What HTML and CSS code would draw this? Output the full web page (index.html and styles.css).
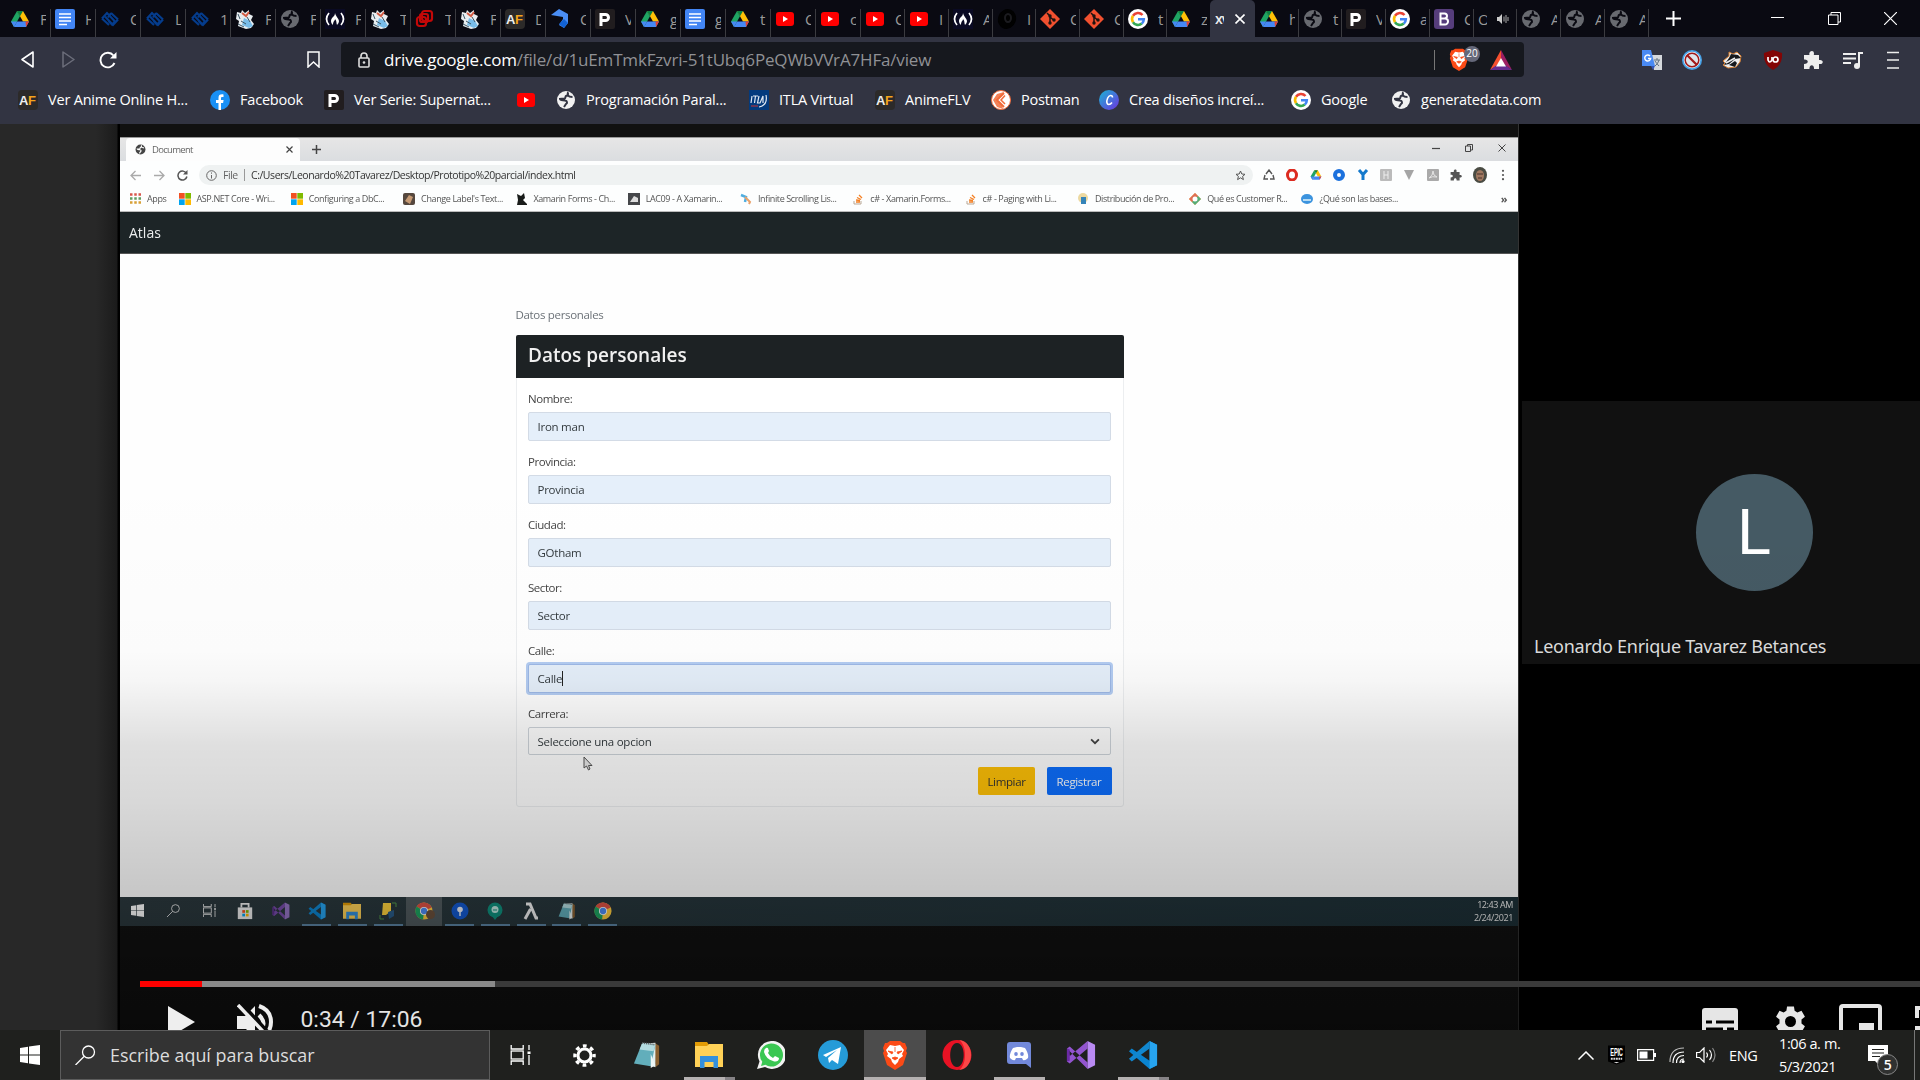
FILE: index.html
```html
<!DOCTYPE html>
<html lang="es">
<head>
<meta charset="utf-8">
<title>drive.google.com</title>
<link rel="stylesheet" href="styles.css">
</head>
<body>
<svg class="defs" aria-hidden="true">
  <symbol id="drive" viewBox="0 0 20 20"><path d="M7 2h6l6 10.5h-6z" fill="#ffc107"/><path d="M7 2l3 5.2L4 18 1 12.5z" fill="#1fa463"/><path d="M4 18l3-5.5h12L16 18z" fill="#4688f4"/><path d="M7 2h6l-3 5.2z" fill="#0b8043"/><path d="M1 12.5L4 18l3-5.5z" fill="#4688f4"/><path d="M15.500 12.500H19L16 18z" fill="#e34133"/></symbol>
  <symbol id="docs" viewBox="0 0 20 20"><rect width="20" height="20" rx="2" fill="#4285f4"/><path d="M4 5h12M4 8.500h12M4 12h12M4 15.500h8" stroke="#fff" stroke-width="1.700"/></symbol>
  <symbol id="knot" viewBox="0 0 20 20"><g fill="none" stroke="#053c8c" stroke-width="2.200"><path d="M2 9.500L7 4l8 8.500-3 3-3.500-3.500"/><path d="M18 10.500L13 16 5 7.500"/><path d="M11 4l7 6.500M9 16L2 9.500M8 8.500l3-4.500"/></g></symbol>
  <symbol id="rick" viewBox="0 0 20 20"><path d="M2 3l4 1 1-3 3 3 4-3v4l4 2-2 4 3 4-3 4-5 1-8-3 1-5-3-2z" fill="#e8edf0"/><path d="M9 9l6 3 3 5-4 2-7-3z" fill="#79bce8"/><path d="M7 4l4 3 3-4" stroke="#d35b43" stroke-width="2" fill="none"/><path d="M3 5l2 5M6 12l5 3M12 8l3 5M3 15l6 3" stroke="#3b5565" fill="none"/></symbol>
  <symbol id="globe" viewBox="0 0 20 20"><circle cx="10" cy="10" r="9"/><path d="M11 2.500c2 1 1 3-1 3.500-1 .5 0 2-1.500 2.500L4 9c0 1.500 3 1 5 1.500 2.500.5 2.500 2.500 1 3.500l-2 3M12 5.500c1 1.500 2 1.500 4.500 1.500" class="land"/></symbol>
  <symbol id="fcc" viewBox="0 0 20 20"><rect width="20" height="20" fill="#0a0a23"/><path d="M4 4q-5 6 0 12M16 4q5 6 0 12" stroke="#fff" stroke-width="1.700" fill="none"/><path d="M10 4c0 4-4 4-4 8 0 2 1 3 2 4 0-4 2-4 2-6 2 2 1 4 2 6 5-5-1-7-2-12z" fill="#fff"/></symbol>
  <symbol id="rings" viewBox="0 0 20 20"><g fill="none" stroke="#c30808" stroke-width="2.200"><rect x="7" y="2" width="10" height="10" rx="2.500"/><rect x="2" y="8" width="9" height="9" rx="2.500"/><rect x="5" y="5" width="8" height="8" rx="2"/></g></symbol>
  <symbol id="af" viewBox="0 0 20 20"><rect width="20" height="20" rx="4" fill="#2c2a29"/><text x="1" y="15" class="t-af" fill="#eee">A<tspan fill="#f5a31b">F</tspan></text></symbol>
  <symbol id="kite" viewBox="0 0 20 20"><path d="M1 6l8-6 9 5v9l-4 5-5-3 4-6V8z" fill="#4a8ef5"/><path d="M9 15l5-5 4 4-4 5z" fill="#1262d4"/></symbol>
  <symbol id="pee" viewBox="0 0 20 20"><rect width="20" height="20" rx="2" fill="#211d1f"/><path d="M6 4v13M6 5.500h4.500a3 3 0 0 1 0 6H7" fill="none" stroke="#fff" stroke-width="3"/></symbol>
  <symbol id="yt" viewBox="0 0 20 20"><rect x="1" y="3" width="18" height="14" rx="3" fill="#f00"/><path d="M8 7l5 3-5 3z" fill="#fff"/></symbol>
  <symbol id="disc" viewBox="0 0 20 20"><ellipse cx="10" cy="10" rx="9" ry="10" fill="#010101" transform="rotate(20 10 10)"/><ellipse cx="11" cy="9" rx="3" ry="4" fill="none" stroke="#1b1b1f" stroke-width="2"/></symbol>
  <symbol id="git" viewBox="0 0 20 20"><path d="M10 0l10 10-10 10L0 10z" fill="#f1502f"/><path d="M7 4l3 3v7M10 8l3.500 3" stroke="#1c1310" stroke-width="1.500" fill="none"/><g fill="#1c1310"><circle cx="10" cy="7" r="1.700"/><circle cx="10" cy="14" r="1.700"/><circle cx="14" cy="11" r="1.700"/></g></symbol>
  <symbol id="google" viewBox="0 0 20 20"><circle cx="10" cy="10" r="10" fill="#fff"/><g fill="none" stroke-width="2.600"><path d="M14.500 6A6 6 0 0 0 5 6.800" stroke="#ea4335"/><path d="M5 6.800a6 6 0 0 0 0 6.400" stroke="#fbbc05"/><path d="M5 13.200a6 6 0 0 0 8.800 1.400" stroke="#34a853"/><path d="M13.800 14.600A6 6 0 0 0 15.800 10.200H10" stroke="#4285f4"/></g></symbol>
  <symbol id="boot" viewBox="0 0 20 20"><rect width="20" height="20" rx="3" fill="#563d7c"/><path d="M6.500 4.500v11h4.500a3 3 0 0 0 0-6H7h3.500a2.500 2.500 0 0 0 0-5z" fill="none" stroke="#fff" stroke-width="2"/></symbol>
  <symbol id="fb" viewBox="0 0 20 20"><circle cx="10" cy="10" r="10" fill="#1990f5"/><path d="M8.500 20v-7H6v-3h2.500V8c0-3 1.500-4 5-3.600V7c-2-.2-2.500 0-2.500 1.300V10h2.600l-.5 3H11v7z" fill="#fff"/></symbol>
  <symbol id="itla" viewBox="0 0 20 20"><rect width="20" height="20" fill="#033a7d"/><path d="M3 6l-1 7M4 6h5M6.500 6l-1 7M10 6l-1.500 7h2.500l3-7v7M17 5q2 10-7 12" stroke="#dfe8f3" stroke-width="1.200" fill="none"/><path d="M2 16h7" stroke="#c33"/></symbol>
  <symbol id="postman" viewBox="0 0 20 20"><circle cx="10" cy="10" r="9.500" fill="#fff" stroke="#f26b3a"/><path d="M13 3l-7 7 7 7" stroke="#f26b3a" stroke-width="2" fill="none"/><path d="M13 2l-2 3-5 5 5 5 1 4-6-2-4-7 4-6z" fill="#f26b3a" opacity=".85"/><path d="M14 5.500l-4 4.500 4 4" stroke="#f26b3a" stroke-width="1.500" fill="none"/></symbol>
  <symbol id="canva" viewBox="0 0 20 20"><linearGradient id="cg" x2="1" y2="1"><stop stop-color="#19b5d4"/><stop offset="1" stop-color="#7033e0"/></linearGradient><circle cx="10" cy="10" r="10" fill="url(#cg)"/><path d="M13.500 7.500c0-3-3.500-2.500-4.800.5-1.700 4-.7 6.500 1 6.500 1.500 0 2.600-1 3.300-2" stroke="#fff" stroke-width="1.600" fill="none"/></symbol>
  <symbol id="lion" viewBox="0 0 26 30"><path d="M8 1h10l3 2h2l2 5-1 3 1 2-4 12-8 5-8-5L1 13l1-2-1-3 2-5h2z" fill="#fb4a16"/><path d="M8 5l5 1 5-1 4 5-2 4 1 2-4 3-1 3-3 3-3-3-1-3-4-3 1-2-2-4z" fill="#fff"/><path d="M6 11l5 1-1 2zM20 11l-5 1 1 2zM10 18l3-1 3 1-3 2zM13 7v5" fill="#fb4a16" stroke="#fb4a16" stroke-width=".8"/></symbol>
  <symbol id="win" viewBox="0 0 20 20"><path d="M0 3l8-1.200V9.500H0zM9 1.600L20 0v9.500H9zM0 10.500h8v7.700L0 17zM9 10.500h11V20L9 18.400z"/></symbol>
  <symbol id="lens" viewBox="0 0 20 20"><circle cx="13" cy="7" r="6" fill="none" stroke="currentColor" stroke-width="1.300"/><path d="M8.500 11.500L0 20" stroke="currentColor" stroke-width="1.300"/></symbol>
  <symbol id="tv" viewBox="0 0 20 20"><g fill="none" stroke="currentColor" stroke-width="1.300"><path d="M.7 0v4h12V0M.7 20v-4h12v4"/><rect x=".7" y="6" width="12" height="8"/><path d="M18.500 0v5M18.500 10v10"/></g><path d="M17 6.500h3V9h-3z" fill="currentColor"/></symbol>
  <symbol id="vsc" viewBox="0 0 32 32"><path d="M23 1l8 4v22l-8 4L1 12l3-3 19 13z" fill="#0a84d0"/><path d="M23 1l8 4v22l-8 4V1z" fill="#27a4f0"/><path d="M1 20l3 3L23 9V1z" fill="#1187cf"/></symbol>
  <symbol id="vs" viewBox="0 0 32 32"><path d="M1 9l3-2 19 17v7L1 9zM1 9v14l3 2L23 9V1L4 17z" fill="#9254cf"/><path d="M1 9v14l3-1V10z" fill="#6b2aa5"/><path d="M23 1l8 4v22l-8 4z" fill="#b98af3"/></symbol>
  <symbol id="folder" viewBox="0 0 28 28"><path d="M0 1h12l2 3v3H0z" fill="#e29b05"/><path d="M0 5h12l2-2h14v23H0z" fill="#ffd157"/><path d="M5 27V15h18v12h-4.500v-6h-9v6z" fill="#3490dc"/></symbol>
  <symbol id="notepad" viewBox="0 0 28 30"><path d="M22 2l5 3v20l-4 3z" fill="#8a6030"/><path d="M9 3l14-1v26l-6-2z" fill="#e1eff0"/><path d="M9 2l14 2-5 23L0 24z" fill="#62aebb"/><path d="M9 2l14 2-2 7-15-2z" fill="#b3dce0"/><path d="M18 14l5 12-5 3z" fill="#eef6f6"/><path d="M9 2l14 2" stroke="#555" stroke-width="2" stroke-dasharray="1 1"/></symbol>
  <symbol id="puzzle" viewBox="0 0 20 20"><path d="M1 5h5.500C5 1 11-1 11 3.500L10.800 5H16v5c5-1 5 5 0 4v5h-5c.5-5-5-5-4.500 0H1v-5c5 0 5-5 0-4.500z"/></symbol>
  <symbol id="chrome" viewBox="0 0 20 20"><circle cx="10" cy="10" r="9.500" fill="#ffcd40"/><path d="M10 10L1.800 5A9.500 9.500 0 0 1 18.500 6z" fill="#dd5144"/><path d="M10 10L1.800 5A9.500 9.500 0 0 0 9 19.500z" fill="#1da462"/><circle cx="10" cy="10" r="4.500" fill="#fff"/><circle cx="10" cy="10" r="3.500" fill="#4b8bf5"/></symbol>
  <symbol id="ms" viewBox="0 0 12 12"><path d="M0 0h5.700v5.700H0z" fill="#f25022"/><path d="M6.300 0H12v5.700H6.300z" fill="#7fba00"/><path d="M0 6.300h5.700V12H0z" fill="#00a4ef"/><path d="M6.300 6.300H12V12H6.300z" fill="#ffb900"/></symbol>
  <symbol id="stack" viewBox="0 0 12 12"><path d="M2 8v3h7V8" fill="none" stroke="#b9a795"/><path d="M4 9h4M4 7l4 .5M5 4.500l4 2M7 2l3 3" stroke="#f48024" stroke-width="1.300"/></symbol>
</svg>

<header class="browser">
  <div class="tabstrip">
    <div class="tabs">
      <div class="tab"><svg><use href="#drive"/></svg><span>F</span></div>
      <div class="tab"><svg><use href="#docs"/></svg><span>H</span></div>
      <div class="tab"><svg><use href="#knot"/></svg><span>C</span></div>
      <div class="tab"><svg><use href="#knot"/></svg><span>L</span></div>
      <div class="tab"><svg><use href="#knot"/></svg><span>1</span></div>
      <div class="tab"><svg><use href="#rick"/></svg><span>F</span></div>
      <div class="tab"><svg class="dim"><use href="#globe"/></svg><span>F</span></div>
      <div class="tab"><svg><use href="#fcc"/></svg><span>F</span></div>
      <div class="tab"><svg><use href="#rick"/></svg><span>T</span></div>
      <div class="tab"><svg><use href="#rings"/></svg><span>T</span></div>
      <div class="tab"><svg><use href="#rick"/></svg><span>F</span></div>
      <div class="tab"><svg><use href="#af"/></svg><span>D</span></div>
      <div class="tab"><svg><use href="#kite"/></svg><span>C</span></div>
      <div class="tab"><svg><use href="#pee"/></svg><span>V</span></div>
      <div class="tab"><svg><use href="#drive"/></svg><span>g</span></div>
      <div class="tab"><svg><use href="#docs"/></svg><span>g</span></div>
      <div class="tab"><svg><use href="#drive"/></svg><span>t</span></div>
      <div class="tab"><svg><use href="#yt"/></svg><span>C</span></div>
      <div class="tab"><svg><use href="#yt"/></svg><span>c</span></div>
      <div class="tab"><svg><use href="#yt"/></svg><span>C</span></div>
      <div class="tab"><svg><use href="#yt"/></svg><span>I</span></div>
      <div class="tab"><svg><use href="#fcc"/></svg><span>A</span></div>
      <div class="tab"><svg><use href="#disc"/></svg><span>I</span></div>
      <div class="tab"><svg><use href="#git"/></svg><span>C</span></div>
      <div class="tab"><svg><use href="#git"/></svg><span>C</span></div>
      <div class="tab"><svg><use href="#google"/></svg><span>t</span></div>
      <div class="tab no-line"><svg><use href="#drive"/></svg><span>z</span></div>
      <div class="tab active"><span>xv</span><svg class="x" viewBox="0 0 10 10"><path d="M.5.500l9 9M9.500.500l-9 9" stroke="#fff" stroke-width="1.600"/></svg></div>
      <div class="tab"><svg><use href="#drive"/></svg><span>h</span></div>
      <div class="tab"><svg class="dim"><use href="#globe"/></svg><span>t</span></div>
      <div class="tab"><svg><use href="#pee"/></svg><span>V</span></div>
      <div class="tab"><svg><use href="#google"/></svg><span>a</span></div>
      <div class="tab"><svg><use href="#boot"/></svg><span>C</span></div>
      <div class="tab audio"><span>O</span><svg class="spk" viewBox="0 0 12 10"><path d="M0 3h2l3-3v10L2 7H0z" fill="#ccc"/><path d="M7 2.500v5M9 1v8M11 3v4" stroke="#aaa"/></svg></div>
      <div class="tab"><svg class="dim"><use href="#globe"/></svg><span>A</span></div>
      <div class="tab"><svg class="dim"><use href="#globe"/></svg><span>A</span></div>
      <div class="tab"><svg class="dim"><use href="#globe"/></svg><span>A</span></div>
    </div>
    <svg class="plus" viewBox="0 0 15 15"><path d="M7.500 0v15M0 7.500h15" stroke="#fff" stroke-width="2"/></svg>
    <div class="wincontrols">
      <svg viewBox="0 0 13 13"><path d="M0 5.500h13" stroke="#fff"/></svg>
      <svg viewBox="0 0 13 13"><path d="M.5 3h9.500v9.500H.5zM3 3V.500h9.500V10H10" stroke="#fff" fill="none"/></svg>
      <svg viewBox="0 0 13 13"><path d="M0 0l13 13M13 0L0 13" stroke="#fff" stroke-width="1.200"/></svg>
    </div>
  </div>
  <div class="toolbar">
    <div class="nav">
      <svg class="tri" viewBox="0 0 13 17"><path d="M12 1v15L1 8.500z" fill="none" stroke="#fff" stroke-width="1.600" stroke-linejoin="round"/></svg>
      <svg class="tri off" viewBox="0 0 13 17"><path d="M1 1v15l11-7.500z" fill="none" stroke="#6c6e7b" stroke-width="1.500" stroke-linejoin="round"/></svg>
      <svg class="reload" viewBox="0 0 18 18"><path d="M14.500 4.500A7.300 7.300 0 1 0 15.500 12" fill="none" stroke="#fff" stroke-width="1.900"/><path d="M17.500 1v6.500h-6.500z" fill="#fff"/></svg>
    </div>
    <svg class="mark" viewBox="0 0 13 17"><path d="M1 1h11v15l-5.500-5L1 16z" fill="none" stroke="#fff" stroke-width="1.500"/></svg>
    <div class="address">
      <svg class="lock" viewBox="0 0 12 16"><rect x="1" y="6" width="10" height="9" rx="1" fill="none" stroke="#ddd" stroke-width="1.600"/><path d="M3 6V4a3 3 0 0 1 6 0v2" fill="none" stroke="#ddd" stroke-width="1.600"/><circle cx="6" cy="10.500" r="1.300" fill="#ddd"/></svg>
      <p class="url"><b>drive.google.com</b>/file/d/1uEmTmkFzvri-51tUbq6PeQWbVVrA7HFa/view</p>
      <i class="sep"></i>
      <div class="shield"><svg><use href="#lion"/></svg><em>20</em></div>
      <svg class="bat" viewBox="0 0 22 20"><path d="M11 0L0 20l11-7z" fill="#f5502f"/><path d="M11 0l11 20-11-7z" fill="#9e1f63"/><path d="M0 20l11-8 11 8z" fill="#662d91"/><path d="M11 8l5 8.500H6z" fill="#fff"/></svg>
    </div>
    <div class="exts">
      <svg viewBox="0 0 20 20"><path d="M8 5h12v15h-8z" fill="#d5d8dc"/><path d="M12 10h6M15 8v2M17 10q-1 4-4 6M13 11q2 3 4 5" stroke="#607080" fill="none"/><path d="M0 0h9l4 16H0z" fill="#4a8af4"/><path d="M9 16h4l-2 4z" fill="#3757b8"/><path d="M8 6a3 3 0 1 0 .7 2.500H6" stroke="#fff" stroke-width="1.400" fill="none"/></svg>
      <svg viewBox="0 0 20 20"><circle cx="10" cy="10" r="10" fill="#48a3e8"/><circle cx="10" cy="10" r="8.300" fill="#e9eef2"/><circle cx="10" cy="10" r="6.800" fill="#dfe6ec" stroke="#a11919" stroke-width="1.500"/><path d="M5 5l10 10" stroke="#a11919" stroke-width="2.200"/></svg>
      <svg viewBox="0 0 20 20"><path d="M1 11l6-5 0-4 4 2 4-2 4 4-1 6-4 5-8 1-5-3 2-2z" fill="#eee" stroke="#d98031"/><path d="M9 4l7 1 3 3-6 1-6 5-5 1 5-7z" fill="#16191d"/><path d="M7 15l6-4 2 2-2 4z" fill="#16191d"/><path d="M4 13l9-5" stroke="#eee" stroke-width="1.500"/></svg>
      <svg viewBox="0 0 20 20"><path d="M10 0l9 3q1 12-9 17Q0 15 1 3z" fill="#830505"/><path d="M5 7v3q1.500 4 4 0V7" stroke="#fff" stroke-width="1.700" fill="none"/><circle cx="12.500" cy="9.500" r="2.500" stroke="#fff" stroke-width="1.700" fill="none"/></svg>
      <svg viewBox="0 0 20 20" fill="#eee"><use href="#puzzle"/></svg>
      <svg viewBox="0 0 20 20"><path d="M0 4h13M0 8.500h13M0 13h8M16 16V3h4" stroke="#eee" stroke-width="2" fill="none"/><circle cx="14" cy="16" r="3" fill="#eee"/></svg>
      <svg viewBox="0 0 20 20"><path d="M4 2.500h12M4 10h12M4 18h12" stroke="#eee" stroke-width="1.600"/></svg>
    </div>
  </div>
  <nav class="marks">
    <a><svg><use href="#af"/></svg><span>Ver Anime Online H...</span></a>
    <a><svg><use href="#fb"/></svg><span>Facebook</span></a>
    <a><svg><use href="#pee"/></svg><span>Ver Serie: Supernat...</span></a>
    <a><svg><use href="#yt"/></svg></a>
    <a><svg class="light"><use href="#globe"/></svg><span>Programación Paral...</span></a>
    <a><svg><use href="#itla"/></svg><span>ITLA Virtual</span></a>
    <a><svg><use href="#af"/></svg><span>AnimeFLV</span></a>
    <a><svg><use href="#postman"/></svg><span>Postman</span></a>
    <a><svg><use href="#canva"/></svg><span>Crea diseños increí...</span></a>
    <a><svg><use href="#google"/></svg><span>Google</span></a>
    <a><svg class="light"><use href="#globe"/></svg><span>generatedata.com</span></a>
  </nav>
</header>

<main class="viewer">
  <aside class="gutter"></aside>
  <section class="player">
    <div class="frame">
      <div class="shared">
        <div class="c-tabs">
          <div class="c-tab"><svg class="c-globe"><use href="#globe"/></svg><span>Document</span><svg class="c-x" viewBox="0 0 7 7"><path d="M.5.500l6 6M6.500.500l-6 6" stroke="#444" stroke-width="1.200"/></svg></div>
          <svg class="c-plus" viewBox="0 0 9 9"><path d="M4.500 0v9M0 4.500h9" stroke="#444" stroke-width="1.500"/></svg>
          <div class="c-win">
            <svg viewBox="0 0 8 8"><path d="M0 4.500h8" stroke="#444" stroke-width="1.200"/></svg>
            <svg viewBox="0 0 8 8"><path d="M.5 2h5v5.500h-5zM2.500 2V.500h5V6h-2" stroke="#444" fill="none"/></svg>
            <svg viewBox="0 0 8 8"><path d="M.5.500l7 7M7.500.500l-7 7" stroke="#444"/></svg>
          </div>
        </div>
        <div class="c-bar">
          <div class="c-nav">
            <svg viewBox="0 0 11 11"><path d="M11 5.500H1M5.500 1L1 5.500 5.500 10" stroke="#aaa" stroke-width="1.300" fill="none"/></svg>
            <svg viewBox="0 0 11 11"><path d="M0 5.500h10M5.500 1L10 5.500 5.500 10" stroke="#aaa" stroke-width="1.300" fill="none"/></svg>
            <svg viewBox="0 0 11 11"><path d="M9.500 3.500a4.500 4.500 0 1 0 .4 3" stroke="#555" stroke-width="1.500" fill="none"/><path d="M10.500 0v4.500H6z" fill="#555"/></svg>
          </div>
          <div class="c-addr">
            <svg viewBox="0 0 11 11"><circle cx="5.500" cy="5.500" r="4.800" fill="none" stroke="#666"/><path d="M5.500 2.500v1.200M5.500 5v3.500" stroke="#666"/></svg>
            <span class="c-file">File</span><i></i>
            <span class="c-path">C:/Users/Leonardo%20Tavarez/Desktop/Prototipo%20parcial/index.html</span>
            <svg class="c-star" viewBox="0 0 11 11"><path d="M5.500 1l1.300 3 3.200.3-2.400 2.100.8 3.200-2.900-1.800-2.900 1.800.8-3.200L1 4.300 4.200 4z" fill="none" stroke="#555"/></svg>
          </div>
          <div class="c-exts">
            <svg viewBox="0 0 12 12"><path d="M3 5l3-4 3 4M10 6l1 4H7M5 10H1l1-4" fill="none" stroke="#555" stroke-width="1.400"/></svg>
            <svg viewBox="0 0 12 12"><ellipse cx="6" cy="6" rx="4.500" ry="5" fill="none" stroke="#dc2b20" stroke-width="3"/></svg>
            <svg viewBox="0 0 20 20"><use href="#drive"/></svg>
            <svg viewBox="0 0 12 12"><circle cx="6" cy="6" r="4" fill="none" stroke="#1c71dd" stroke-width="4"/></svg>
            <svg viewBox="0 0 12 12"><path d="M2 1l4 4.500L10 1M6 5v6" fill="none" stroke="#1479cc" stroke-width="3"/></svg>
            <svg viewBox="0 0 12 12"><rect width="12" height="12" rx="1" fill="#bbb"/><path d="M4 2v8M8 2v8M4 6h4" stroke="#eee"/></svg>
            <svg viewBox="0 0 12 12"><path d="M1 1h10L6 11z" fill="#a5a5a5"/></svg>
            <svg viewBox="0 0 12 12"><rect width="12" height="12" rx="1" fill="#aaa"/><path d="M2 9q4-2 4-7 0 5 4 6-5-1-8 1z" stroke="#e5e5e5" fill="none"/></svg>
            <svg viewBox="0 0 20 20" fill="#555"><use href="#puzzle"/></svg>
            <svg class="c-face" viewBox="0 0 14 16"><ellipse cx="7" cy="8" rx="7" ry="8" fill="#4a4c43"/><ellipse cx="7" cy="8.500" rx="4" ry="5.500" fill="#a07860"/><path d="M4 7h6M5 11h4" stroke="#44312a"/></svg>
            <svg viewBox="0 0 12 12" fill="#555"><circle cx="6" cy="1.800" r="1.100"/><circle cx="6" cy="6" r="1.100"/><circle cx="6" cy="10.200" r="1.100"/></svg>
          </div>
        </div>
        <div class="c-marks">
          <a class="apps"><svg viewBox="0 0 11 11"><path d="M0 1.500h11" stroke="#d8564b" stroke-width="2.500" stroke-dasharray="2.500 1.750"/><path d="M0 5.500h11" stroke="#5f9b60" stroke-width="2.500" stroke-dasharray="2.500 1.750"/><path d="M0 9.500h11" stroke="#d7a036" stroke-width="2.500" stroke-dasharray="2.500 1.750"/></svg><span>Apps</span></a>
          <a><svg><use href="#ms"/></svg><span>ASP.NET Core - Wri...</span></a>
          <a><svg><use href="#ms"/></svg><span>Configuring a DbC...</span></a>
          <a><svg viewBox="0 0 12 12"><rect width="12" height="12" rx="2" fill="#56483e"/><path d="M2 8l4-6 4 2-3 7z" fill="#c69a74"/></svg><span>Change Label's Text...</span></a>
          <a><svg viewBox="0 0 12 12"><path d="M2 1l4 2 3-3 1 5-2 2 4 4v1H2l1-5z" fill="#191c1a"/></svg><span>Xamarin Forms - Ch...</span></a>
          <a><svg viewBox="0 0 12 12"><rect width="12" height="12" fill="#45474a"/><path d="M2 9l4-6 4 2v4z" fill="#ddd"/></svg><span>LAC09 - A Xamarin...</span></a>
          <a><svg viewBox="0 0 12 12"><path d="M1 2l5 2-1 5" stroke="#50aee0" stroke-width="2.500" fill="none"/><path d="M5 4l5 5-1 2" stroke="#e9a26b" stroke-width="2" fill="none"/></svg><span>Infinite Scrolling Lis...</span></a>
          <a><svg><use href="#stack"/></svg><span>c# - Xamarin.Forms...</span></a>
          <a><svg><use href="#stack"/></svg><span>c# - Paging with Li...</span></a>
          <a><svg viewBox="0 0 12 12"><circle cx="6" cy="5" r="5" fill="#ecd9a1"/><path d="M4 4h5v7H4z" fill="#3584b8"/></svg><span>Distribución de Pro...</span></a>
          <a><svg viewBox="0 0 12 12"><path d="M6 0l6 6-6 6-6-6z" fill="#e8a345"/><path d="M6 0l3 3-6 6-3-3z" fill="#df6f54"/><path d="M9 3l3 3-6 6-3-3z" fill="#55ad78"/><circle cx="6" cy="6" r="2.500" fill="#fff"/></svg><span>Qué es Customer R...</span></a>
          <a><svg viewBox="0 0 12 12"><ellipse cx="6" cy="6" rx="6" ry="5" fill="#3b93de"/><path d="M2 7h8" stroke="#b6dbf4" stroke-width="2"/></svg><span>¿Qué son las bases...</span></a>
          <b>»</b>
        </div>
        <div class="atlas">Atlas</div>
        <div class="page">
          <div class="crumb">Datos personales</div>
          <form class="card">
            <h1>Datos personales</h1>
            <div class="fields">
              <label>Nombre:</label><div class="input">Iron man</div>
              <label>Provincia:</label><div class="input">Provincia</div>
              <label>Ciudad:</label><div class="input">GOtham</div>
              <label>Sector:</label><div class="input">Sector</div>
              <label>Calle:</label><div class="input focus">Calle<i class="caret"></i></div>
              <label>Carrera:</label><div class="input select">Seleccione una opcion<svg viewBox="0 0 9 6"><path d="M1 1l3.500 3.500L8 1" stroke="#444" stroke-width="1.600" fill="none"/></svg></div>
            </div>
            <div class="actions"><span class="btn warn">Limpiar</span><span class="btn primary">Registrar</span></div>
          </form>
          <svg class="cursor" viewBox="0 0 10 15"><path d="M1 1v11l2.500-2 2 4 1.500-1-1.500-3.500H9z" fill="#e8e8e8" stroke="#555"/></svg>
        </div>
        <div class="v-taskbar">
          <div class="v-apps">
            <span><svg class="w" fill="#fff"><use href="#win"/></svg></span>
            <span><svg class="w"><use href="#lens"/></svg></span>
            <span><svg class="w"><use href="#tv"/></svg></span>
            <span><svg viewBox="0 0 18 20"><path d="M1 6h16v13H1z" fill="#eee"/><path d="M5 6V2h8v4" stroke="#eee" stroke-width="2" fill="none"/><path d="M6 9h3v3H6z" fill="#f25022"/><path d="M10 9h3v3h-3z" fill="#7fba00"/><path d="M6 13h3v3H6z" fill="#00a4ef"/><path d="M10 13h3v3h-3z" fill="#ffb900"/></svg></span>
            <span><svg class="faint"><use href="#vs"/></svg></span>
            <span class="run"><svg><use href="#vsc"/></svg></span>
            <span class="run"><svg><use href="#folder"/></svg></span>
            <span class="run"><svg viewBox="0 0 18 18"><path d="M4 1h8v8l-5 4H3z" fill="#ffd23d"/><path d="M13 1h4v4M1 13v4h4" stroke="#53964a" fill="none"/><path d="M9 10l6-2v6l-5 3z" fill="#295b87"/></svg></span>
            <span class="run on"><svg><use href="#chrome"/></svg><i></i></span>
            <span class="run"><svg viewBox="0 0 18 18"><circle cx="9" cy="9" r="8.500" fill="#1359cf"/><circle cx="9" cy="7.500" r="2.800" fill="#e9eff9"/><path d="M9 9v5" stroke="#e9eff9" stroke-width="1.500"/></svg></span>
            <span class="run"><svg viewBox="0 0 18 18"><circle cx="9" cy="8" r="7.500" fill="#0f8f7d"/><path d="M6 14l3 4 3-4z" fill="#0f8f7d"/><circle cx="9" cy="7.500" r="3.500" fill="#bfe5df"/><path d="M7 8h4" stroke="#0f8f7d"/></svg></span>
            <span class="run"><svg viewBox="0 0 18 18"><path d="M4 2h4l6 14h2M8.500 7L3 17" stroke="#f1f1f1" stroke-width="3" fill="none"/></svg></span>
            <span class="run"><svg><use href="#notepad"/></svg></span>
            <span class="run"><svg><use href="#chrome"/></svg></span>
          </div>
          <div class="v-clock"><span>12:43 AM</span><span>2/24/2021</span></div>
        </div>
      </div>
      <div class="people">
        <div class="tile">
          <div class="avatar">L</div>
          <p>Leonardo Enrique Tavarez Betances</p>
        </div>
      </div>
    </div>
    <div class="controls">
      <div class="progress"><i class="played"></i><i class="loaded"></i></div>
      <div class="buttons">
        <svg class="play" viewBox="0 0 27 32"><path d="M0 0v32l27-16z" fill="#eee"/></svg>
        <svg class="mute" viewBox="0 0 36 36"><path d="M0 12h8l10-10v32l-9-9H0z" fill="#eee"/><path d="M22 2q12 4 12 16 0 7-4 11M22 11q7 7 3 13" fill="none" stroke="#eee" stroke-width="4"/><path d="M3-2l34 37" stroke="#0a0a0a" stroke-width="4"/><path d="M1 1l35 37" stroke="#eee" stroke-width="3.500"/></svg>
        <span class="time">0:34 / 17:06</span>
        <div class="right">
          <svg class="cc" viewBox="0 0 36 30"><rect width="36" height="30" rx="3" fill="#e6e6e6"/><path d="M4 14h6M14 14h18M4 21h17M25 21h7" stroke="#000" stroke-width="3"/></svg>
          <svg class="cog" viewBox="0 0 24 24" fill="#e6e6e6"><path fill-rule="evenodd" d="M9.500 1h5l.5 3.200 2 1.200L20 4.200l2.500 4.300L20 10.600v2.800l2.500 2.100-2.500 4.300-3-1.200-2 1.200-.5 3.200h-5L9 19.800l-2-1.200-3 1.200-2.500-4.300L4 13.400v-2.800L1.500 8.500 4 4.200l3 1.200 2-1.200zM12 8a4 4 0 1 0 0 8 4 4 0 0 0 0-8z"/></svg>
          <svg class="mini" viewBox="0 0 43 36"><rect x="2" y="2" width="39" height="32" rx="2" fill="none" stroke="#e6e6e6" stroke-width="4"/><path d="M20 19h15v12H20z" fill="#e6e6e6"/></svg>
          <svg class="full" viewBox="0 0 5 30"><path d="M0 0h5v4H4v8H0zM0 20h5v4H0z" fill="#e6e6e6"/></svg>
        </div>
      </div>
    </div>
  </section>
</main>

<footer class="taskbar">
  <div class="start"><svg fill="#fff"><use href="#win"/></svg></div>
  <div class="search"><svg><use href="#lens"/></svg><span>Escribe aquí para buscar</span></div>
  <div class="apps-row">
    <span class="app s20"><svg><use href="#tv"/></svg></span>
    <span class="app s23"><svg viewBox="0 0 24 24"><g fill="none" stroke="#fff"><circle cx="12" cy="12" r="6.800" stroke-width="3.200"/><circle cx="12" cy="12" r="10" stroke-width="3.500" stroke-dasharray="3.900 3.954" stroke-dashoffset="2"/></g></svg></span>
    <span class="app s28"><svg><use href="#notepad"/></svg></span>
    <span class="app s28 running more"><svg><use href="#folder"/></svg></span>
    <span class="app s28"><svg viewBox="0 0 28 28"><path d="M14 0a14 14 0 1 1-6 26L0 28l2.500-7.500A14 14 0 0 1 14 0z" fill="#f2f2f2"/><path d="M14 2.500a11.500 11.500 0 1 1-5.500 21.300L4 25l1.300-4.200A11.500 11.500 0 0 1 14 2.500z" fill="#3ac752"/><path d="M9 7c2-1 2 0 3 3l-1 2q2 4 5 5l2-2 4 2c0 4-4 4-6 3q-7-2-9-9 0-3 2-4z" fill="#fff"/></svg></span>
    <span class="app s30"><svg viewBox="0 0 30 30"><circle cx="15" cy="15" r="15" fill="#259bd8"/><path d="M5 15l18-8-3 17-6-4-3 3-1-5 9-8-11 7z" fill="#fff"/></svg></span>
    <span class="app s30 current"><svg><use href="#lion"/></svg></span>
    <span class="app s30"><svg viewBox="0 0 30 30"><path fill-rule="evenodd" d="M15 0a14.500 15 0 1 0 0 30 14.500 15 0 0 0 0-30zm0 3c9 0 9 24 0 24S6 3 15 3z" fill="#e81224"/><path d="M17 0c16 1 16 29 0 30 8-5 8-25 0-30z" fill="#fb4747"/></svg></span>
    <span class="app s26 running"><svg viewBox="0 0 24 26"><path d="M3 0h18q3 0 3 3v23l-5-4H3q-3 0-3-3V3q0-3 3-3z" fill="#7289da"/><path d="M6 6l4-1h4l4 1q4 6 3 10-3 3-5 2l-1-2H9l-1 2q-2 1-5-2-1-4 3-10z" fill="#fff"/><ellipse cx="9" cy="12" rx="1.800" ry="2" fill="#7289da"/><ellipse cx="15" cy="12" rx="1.800" ry="2" fill="#7289da"/></svg></span>
    <span class="app s30"><svg><use href="#vs"/></svg></span>
    <span class="app s30 running more"><svg><use href="#vsc"/></svg></span>
  </div>
  <div class="tray">
    <svg class="up" viewBox="0 0 16 9"><path d="M.5 8.500L8 1l7.500 7.500" fill="none" stroke="#fff" stroke-width="1.500"/></svg>
    <svg class="epic" viewBox="0 0 18 20"><path d="M0 0h18v17l-9 3-9-3z" fill="#000"/><text x="2.500" y="11" textLength="13" lengthAdjust="spacingAndGlyphs" class="t-epic">EPIC</text><path d="M3 14h12" stroke="#ddd" stroke-width="2" stroke-dasharray="2 .7"/><path d="M6 17.500h6l-3 1.300z" fill="#ddd"/></svg>
    <svg class="batt" viewBox="0 0 19 12"><path d="M.6.600h16v10.800H.6z" fill="none" stroke="#fff" stroke-width="1.200"/><path d="M2.500 2.500h8v7h-8z" fill="#fff"/><path d="M18 4v4" stroke="#fff" stroke-width="2"/></svg>
    <svg class="wifi" viewBox="0 0 16 16"><g fill="none" stroke="#fff" stroke-width="1.200"><path d="M1 15Q1 1 15 1" opacity=".7"/><path d="M4 16q0-11 11-11M7.500 16q0-7.500 7.500-7.500M11 16q0-4 4-4"/></g><circle cx="14" cy="14.500" r="1.600" fill="#fff"/></svg>
    <svg class="vol" viewBox="0 0 20 16"><path d="M.6 5.500h3L8 1v14l-4.400-4.500h-3z" fill="none" stroke="#fff" stroke-width="1.200"/><path d="M10.500 5.500q2 2.500 0 5M13.500 3q4 5 0 10" fill="none" stroke="#fff" stroke-width="1.200"/><path d="M16.500 1q5 7 0 14" fill="none" stroke="#888" stroke-width="1.200"/></svg>
    <span class="lang">ENG</span>
    <div class="clock"><span>1:06 a. m.</span><span>5/3/2021</span></div>
    <div class="note"><svg viewBox="0 0 20 20"><path d="M0 0h20v16h-9v4l-4-4H0z" fill="#fff"/><path d="M4 4.500h12M4 8h12M4 11.500h8" stroke="#1f201e" stroke-width="1.200"/></svg><em>5</em></div>
  </div>
</footer>
</body>
</html>
```
FILE: styles.css
```css
* { box-sizing: border-box; }
body { margin: 0; width: 1920px; height: 1080px; overflow: hidden; display: flex; flex-direction: column; background: #000; color: #fff; font-family: "Open Sans", "Noto Sans", sans-serif; }
svg { display: block; flex: none; }
p, h1 { margin: 0; font-weight: 400; }
em, i { font-style: normal; }
.defs { position: absolute; width: 0; height: 0; }
.land { fill: none; stroke-width: 2; stroke: var(--land, #0a0a12); }
.t-af { font: 700 13px "Liberation Sans", sans-serif; letter-spacing: -.5px; }
.t-epic { font: 700 11px "Liberation Sans", sans-serif; fill: #fff; }

.browser { flex: none; height: 124px; background: #323442; }
.tabstrip { height: 37px; background: #0a0a12; display: flex; align-items: center; padding-left: 6px; }
.tabs { display: grid; height: 37px; grid-template-columns: repeat(19, 45px) 44px 44px 44px 43px 44px 44px 43px 43px 45px 44px 43px 44px 44px 44px 43px 44px 44px 44px; margin-right: 17px; }
.tab { display: flex; align-items: center; padding-left: 4px; overflow: hidden; background: linear-gradient(#3b3b40, #3b3b40) right bottom / 1px 28px no-repeat; font-size: 15px; color: #999; white-space: nowrap; }
.tab svg { width: 20px; height: 20px; }
.tab span { width: 6px; overflow: hidden; margin-left: 10px; flex: none; }
.tab.no-line { background: none; }
.tab.active { background: #323442; border-radius: 5px 5px 0 0; color: #eee; padding-left: 5px; }
.tab.active span { margin: 0; width: 9px; font-weight: 600; font-size: 14px; letter-spacing: -1px; }
.tab svg.x { width: 10px; height: 10px; margin-left: 11px; }
.tab.audio span { margin: 0; width: 9px; }
.tab svg.spk { width: 12px; height: 10px; margin-left: 10px; }
.dim { fill: #686a70; }
.light { fill: #f1f1f1; --land: #323442; }
.plus { width: 15px; height: 15px; }
.wincontrols { display: flex; margin-left: 90px; gap: 43.500px; }
.wincontrols svg { width: 13px; height: 13px; }

.toolbar { height: 45px; display: flex; align-items: center; }
.nav { display: flex; align-items: center; padding-left: 21px; width: 307px; }
.tri { width: 13px; height: 17px; margin-right: 28px; }
.tri.off { margin-right: 24px; }
.reload { width: 18px; height: 18px; }
.mark { width: 13px; height: 17px; margin-right: 21px; }
.address { width: 1183px; height: 35px; background: #16181e; border-radius: 4px; display: flex; align-items: center; padding-left: 17px; }
.lock { width: 12px; height: 16px; }
.url { margin-left: 14px; width: 1050px; white-space: nowrap; font-size: 17px; letter-spacing: -.165px; color: #909195; }
.url b { font-weight: 400; color: #fff; }
.sep { width: 1px; height: 20px; background: #777; }
.shield { position: relative; margin-left: 14px; }
.shield svg { width: 20px; height: 23px; }
.shield em { position: absolute; left: 15px; top: -2px; width: 16px; height: 16px; border-radius: 8px; background: #656879; font-size: 10px; line-height: 15px; text-align: center; }
.bat { width: 22px; height: 20px; margin-left: 21px; }
.exts { display: flex; margin-left: 118px; gap: 20.200px; }
.exts svg { width: 20px; height: 20px; }
.marks { display: grid; grid-template-columns: 192px 114px 192px 40px 193px 126px 116px 108px 192px 100px 160px; padding-left: 18px; height: 36px; align-items: center; font-size: 14.500px; letter-spacing: -.2px; }
.marks a { display: flex; align-items: center; gap: 10px; white-space: nowrap; }
.marks span { line-height: 20px; padding-bottom: 1px; }
.marks svg { width: 20px; height: 20px; }

.viewer { display: flex; height: 906px; flex: none; overflow: hidden; }
.gutter { width: 120px; background: linear-gradient(90deg, #282828 96px, #1b1b1b 117px, #000 118px); }
.player { width: 1800px; position: relative; }
.frame { display: flex; height: 906px; }
.shared { width: 1399px; padding-top: 13px; background: #111; filter: blur(.45px); color: #444; border-right: 1px solid #333; }
.c-tabs { height: 24px; background: linear-gradient(#e6e6e6, #dbdde0); display: flex; align-items: center; padding-left: 6px; border-top: 1px solid #999; }
.c-tab { width: 174px; height: 23px; background: #fdfdfd; border-radius: 4px 4px 0 0; display: flex; align-items: center; padding-left: 9px; font-size: 9.500px; letter-spacing: -.7px; color: #666; }
.c-globe { width: 11px; height: 11px; margin-right: 6px; fill: #444; --land: #fff; }
.c-tab span { width: 134px; }
.c-x { width: 7px; height: 7px; }
.c-plus { width: 9px; height: 9px; margin-left: 12px; }
.c-win { display: flex; gap: 25px; margin-left: auto; margin-right: 12px; padding-bottom: 4px; }
.c-win svg { width: 8px; height: 8px; }
.c-bar { height: 28px; background: #fdfefe; display: flex; align-items: center; }
.c-nav { display: flex; gap: 12.500px; padding-left: 10px; width: 79px; }
.c-nav svg, .c-addr svg { width: 11px; height: 11px; }
.c-addr { width: 1054px; height: 20px; border-radius: 10px; background: #eff2f2; display: flex; align-items: center; padding-left: 7px; font-size: 10.500px; letter-spacing: -.45px; white-space: nowrap; }
.c-file { margin-left: 6px; width: 21px; color: #666; }
.c-addr i { width: 1px; height: 12px; background: #999; margin-right: 6px; }
.c-path { color: #333; }
.c-addr .c-star { margin-left: auto; margin-right: 7px; }
.c-exts { display: flex; align-items: center; gap: 11.400px; margin-left: 10px; }
.c-exts svg { width: 12px; height: 12px; }
.c-exts svg.c-face { width: 14px; height: 16px; margin: 0 -1px; }
.c-marks { height: 23px; background: #fdfefe; border-bottom: 1px solid #bbb; display: grid; grid-template-columns: 48.500px repeat(11, 112.300px) 100px; padding-left: 10px; align-items: center; font-size: 9px; letter-spacing: -.38px; color: #555; padding-bottom: 3px; }
.c-marks a { display: flex; align-items: center; gap: 6px; white-space: nowrap; }
.c-marks svg { width: 12px; height: 12px; }
.c-marks .apps svg { width: 11px; height: 11px; }
.c-marks b { font-size: 11px; padding-left: 87px; line-height: 12px; }
.atlas { height: 42px; background: #1d2527; color: #eceeee; display: flex; align-items: center; padding-left: 9px; font-size: 14px; border-bottom: 1px solid #555; }
.page { height: 643px; background: #fefefe; padding: 52px 0 0 395.500px; position: relative; }
.crumb { font-size: 11.500px; letter-spacing: -.32px; line-height: 18px; color: #6c7278; height: 29px; }
.card { width: 608px; height: 472px; border: 1px solid #eceef0; background: #fff; margin: 0; border-radius: 3px; }
.card h1 { margin: -1px; height: 43px; background: #1d2224; color: #f0f0f0; font-size: 19px; font-weight: 600; padding-left: 12.500px; line-height: 41px; border-radius: 2px 2px 0 0; }
.fields { padding: 13px 11.500px 0; display: grid; grid-template-rows: repeat(6, 22px 41px); }
.fields label { font-size: 11.500px; letter-spacing: -.45px; line-height: 18px; color: #444; }
.input { height: 29px; margin: 0; background: #e5effa; border: 1px solid #d3dbe6; border-radius: 2px; display: flex; align-items: center; padding-left: 8.500px; font-size: 11.500px; letter-spacing: -.25px; color: #333a3e; }
.input.focus { border-color: #9db8e6; box-shadow: 0 0 0 2px #b3ccf2; }
.caret { width: 1px; height: 15px; background: #222; }
.input.select { background: #fff; border-color: #ced4da; justify-content: space-between; padding-right: 10px; height: 28px; }
.select svg { width: 10px; height: 7px; }
.actions { display: flex; justify-content: flex-end; gap: 11.500px; padding-right: 11px; margin-top: -1px; }
.btn { height: 28px; border-radius: 2px; font-size: 11.500px; letter-spacing: -.35px; display: flex; align-items: center; justify-content: center; }
.warn { width: 57px; background: #ffc107; color: #333; }
.primary { width: 65px; background: #0d6efd; color: #fff; }
.cursor { position: absolute; left: 463px; top: 502px; width: 10px; height: 15px; }
.v-taskbar { height: 29px; background: linear-gradient(90deg, #2b383d, #1d3037); display: flex; justify-content: space-between; color: #eee; }
.v-apps { display: flex; }
.v-apps span { width: 35.750px; display: flex; align-items: center; justify-content: center; border-bottom: 2px solid transparent; }
.v-apps svg { width: 18px; height: 18px; }
.v-apps svg.w { width: 13px; height: 13px; }
.v-apps .faint { opacity: .75; }
.v-apps .run { background: linear-gradient(#5c84a4, #5c84a4) center bottom / 29px 2px no-repeat border-box; }
.v-apps .on { background: #505a5e; position: relative; }
.v-apps .on i { position: absolute; left: 20px; top: 13px; width: 9px; height: 9px; border-radius: 5px; background: #6b503c; }
.v-clock { font-size: 9px; line-height: 13px; padding: 1px 5px 0 0; display: flex; flex-direction: column; align-items: flex-end; letter-spacing: -.4px; }
.people { flex: 1; background: #000; padding: 277px 0 0 3px; }
.tile { height: 263px; background: #111; display: flex; flex-direction: column; padding: 73px 0 0 173.500px; }
.avatar { width: 117px; height: 117px; border-radius: 50%; background: #455a64; font: 63px/117px Roboto, sans-serif; text-align: center; }
.tile p { margin: 42px 0 0 -161.500px; font: 18px/26px "Noto Sans", sans-serif; letter-spacing: -.26px; color: #ddd; white-space: nowrap; }

.controls { position: absolute; left: 0; right: 0; bottom: 0; height: 560px; padding: 511.300px 0 0 20px; background: linear-gradient(transparent 0, rgba(0,0,0,.01) 180px, rgba(0,0,0,.03) 210px, rgba(0,0,0,.12) 275px, rgba(0,0,0,.15) 330px, rgba(0,0,0,.22) 427px, rgba(0,0,0,.45) 560px); }
.progress { height: 5.400px; background: #3a3a3a; display: flex; }
.played { width: 62px; background: #f00; }
.loaded { width: 293px; background: #8a8a8a; }
.buttons { display: flex; align-items: flex-start; padding: 17px 0 0 28px; }
.play { width: 27px; height: 32px; margin: 2px 42px 0 0; }
.mute { width: 36px; height: 36px; margin-right: 27.500px; }
.time { font: 22.900px/32px Roboto, sans-serif; color: #e4e4e4; white-space: nowrap; }
.right { display: flex; margin-left: auto; align-items: flex-start; }
.cc { width: 36px; height: 30px; margin: 4px 36px 0 0; }
.cog { width: 33px; height: 33px; margin: 1px 32px 0 0; }
.mini { width: 43px; height: 36px; margin-right: 33px; }
.full { width: 5px; height: 30px; margin-top: 2px; }

.taskbar { height: 50px; flex: none; background: #1f201e; display: flex; }
.start { width: 60px; display: grid; place-items: center; }
.start svg { width: 20px; height: 20px; }
.search { width: 430px; background: #333; border: 1px solid #5c5c5c; display: flex; align-items: center; padding-left: 14px; font-size: 17.900px; color: #ddd; white-space: nowrap; }
.search svg { width: 21px; height: 20px; margin-right: 14px; color: #fff; }
.apps-row { display: flex; padding-left: 1.500px; }
.app { width: 62px; display: grid; place-items: center; }
.s20 svg { width: 21px; height: 20px; margin-left: -5px; }
.s23 svg { width: 23px; height: 23px; }
.s26 svg { width: 24px; height: 26px; }
.s28 svg { width: 28px; height: 28px; }
.s30 svg { width: 30px; height: 30px; }
.running { background: linear-gradient(#b5b1b1, #b5b1b1) 6px bottom / 51px 3px no-repeat; }
.running.more { background: linear-gradient(90deg, #b5b1b1 80%, #858285 80%) 6px bottom / 51px 3px no-repeat; }
.current { background: linear-gradient(#b5b1b1, #b5b1b1) bottom / 100% 3px no-repeat, #4c4c4c; }
.tray { display: flex; align-items: center; margin-left: auto; border-right: 1px solid #777; margin-right: 5px; font-size: 14.500px; letter-spacing: -.4px; white-space: nowrap; }
.up { width: 16px; height: 9px; margin-right: 14px; }
.epic { width: 17px; height: 20px; margin-right: 12px; }
.batt { width: 19px; height: 12px; margin-right: 13px; }
.wifi { width: 16px; height: 16px; margin-right: 11px; }
.vol { width: 20px; height: 16px; margin-right: 13px; }
.lang { width: 50px; }
.clock { width: 89px; display: flex; flex-direction: column; line-height: 23px; align-items: flex-start; }
.note { position: relative; width: 46px; }
.note svg { width: 20px; height: 20px; }
.note em { position: absolute; left: 9px; top: 9px; width: 21px; height: 21px; border-radius: 50%; border: 1px solid #888; background: #303130; font-size: 14px; line-height: 19px; text-align: center; font-weight: 600; }
```
